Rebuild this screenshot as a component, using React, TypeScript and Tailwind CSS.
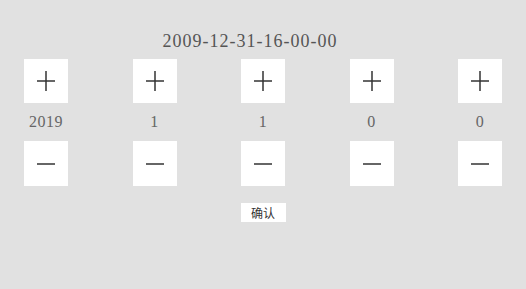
import React from "react";

const columns = ["2019", "1", "1", "0", "0"];

function Plus() {
  return (
    <svg width="18" height="20" viewBox="0 0 18 20" className="text-[#333]">
      <line x1="0" y1="10" x2="18" y2="10" stroke="currentColor" strokeWidth="1.5" />
      <line x1="9" y1="0" x2="9" y2="20" stroke="currentColor" strokeWidth="1.5" />
    </svg>
  );
}

function Minus() {
  return (
    <svg width="18" height="4" viewBox="0 0 18 4" className="text-[#333]">
      <line x1="0" y1="2" x2="18" y2="2" stroke="currentColor" strokeWidth="1.5" />
    </svg>
  );
}

export default function App() {
  return (
    <div className="h-[289px] w-[526px] bg-[#e1e1e1] font-['Liberation_Serif',serif]">
      <div className="pt-[31px] pr-[26px] text-center text-[18px] leading-[20px] tracking-[1px] text-[#555]">
        2009-12-31-16-00-00
      </div>
      <div className="mt-[8px] flex justify-between px-[24px]">
        {columns.map((value, i) => (
          <div key={i} className="flex w-[44px] flex-col items-center">
            <button className="flex h-[44px] w-[44px] items-center justify-center bg-white">
              <Plus />
            </button>
            <div className="flex h-[38px] items-center justify-center text-[16px] tracking-[0.5px] text-[#666]">
              {value}
            </div>
            <button className="flex h-[45px] w-[44px] items-center justify-center bg-white">
              <Minus />
            </button>
          </div>
        ))}
      </div>
      <div className="mt-[17px] flex justify-center">
        <button className="h-[19px] w-[45px] bg-white text-[12px] leading-[19px] text-[#333] font-['Noto_Sans_CJK_SC',sans-serif]">
          确认
        </button>
      </div>
    </div>
  );
}
